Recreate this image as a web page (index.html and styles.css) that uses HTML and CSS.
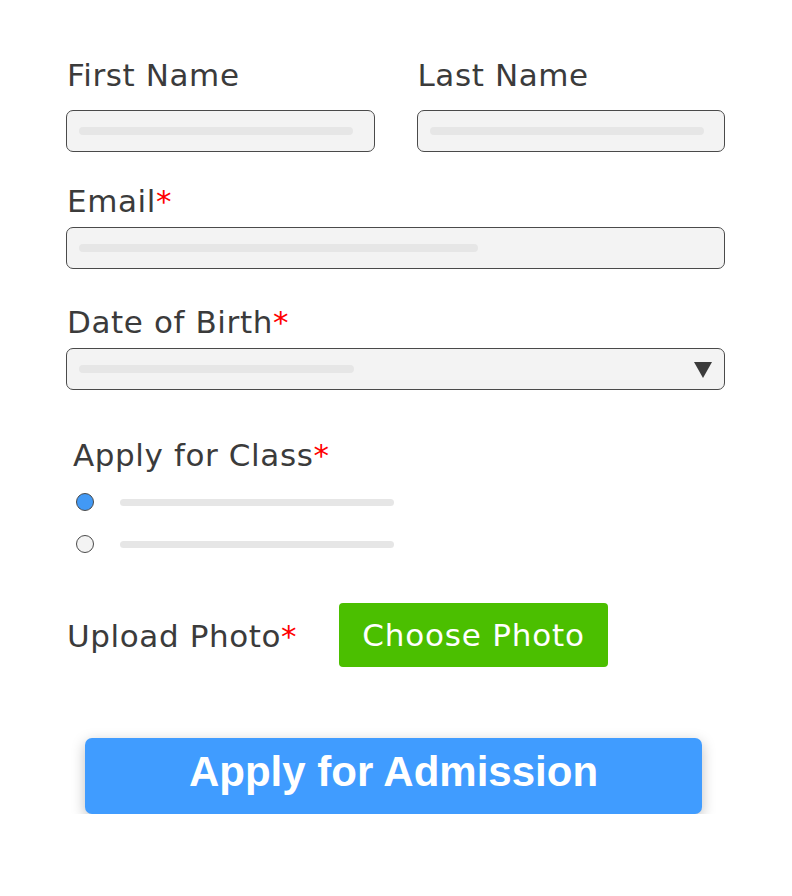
FILE: index.html
```html
<!DOCTYPE html>
<html>
<head>
<meta charset="utf-8">
<link rel="stylesheet" href="styles.css">
</head>
<body>
<form class="form">
  <div class="row two">
    <div class="field">
      <div class="label">First Name</div>
      <div class="input"><span class="ph" style="width:274px"></span></div>
    </div>
    <div class="field">
      <div class="label">Last Name</div>
      <div class="input"><span class="ph" style="width:274px"></span></div>
    </div>
  </div>
  <div class="field mt-email">
    <div class="label">Email<span class="req">*</span></div>
    <div class="input"><span class="ph" style="width:399px"></span></div>
  </div>
  <div class="field mt-dob">
    <div class="label">Date of Birth<span class="req">*</span></div>
    <div class="input select"><span class="ph" style="width:275px"></span><span class="caret"></span></div>
  </div>
  <div class="radios">
    <div class="label">Apply for Class<span class="req">*</span></div>
    <div class="radio-row first"><span class="radio checked"></span><span class="rline"></span></div>
    <div class="radio-row"><span class="radio"></span><span class="rline"></span></div>
  </div>
  <div class="upload">
    <div class="label upload-label">Upload Photo<span class="req">*</span></div>
    <button type="button" class="choose">Choose Photo</button>
  </div>
  <div class="submit-wrap">
    <button type="button" class="submit">Apply for Admission</button>
  </div>
</form>
</body>
</html>
```
FILE: styles.css
```css
html, body {
  margin: 0;
  padding: 0;
  background: #ffffff;
}
body {
  font-family: "DejaVu Sans", "Liberation Sans", sans-serif;
  color: #3b3b3b;
}
.form {
  width: 659px;
  padding: 55px 0 0 66px;
}
.row.two {
  display: flex;
  gap: 42px;
}
.row.two .field {
  flex: 1 1 0;
}
.label {
  font-size: 31px;
  line-height: 40px;
  letter-spacing: 0.6px;
  color: #3b3b3b;
  white-space: nowrap;
}
.field .label {
  padding-left: 1px;
  margin-bottom: 15px;
}
.req {
  color: #ff0000;
  letter-spacing: 0;
}
.input {
  box-sizing: border-box;
  height: 42px;
  border: 1px solid #4a4a4a;
  border-radius: 7px;
  background: #f3f3f3;
  display: flex;
  align-items: center;
  padding-left: 12px;
}
.ph {
  display: block;
  height: 8px;
  border-radius: 4px;
  background: #e6e6e6;
}
.mt-email {
  margin-top: 29px;
}
.mt-email .label,
.mt-dob .label {
  margin-bottom: 6px;
}
.mt-dob {
  margin-top: 33px;
}
.select {
  justify-content: space-between;
  padding-right: 12px;
}
.caret {
  width: 0;
  height: 0;
  border-left: 9px solid transparent;
  border-right: 9px solid transparent;
  border-top: 16px solid #3b3b3b;
  margin-top: 2px;
}
.radios {
  margin-top: 45px;
  padding-left: 7px;
}
.radio-row {
  display: flex;
  align-items: center;
  height: 18px;
  margin-top: 24px;
  padding-left: 3px;
}
.radio-row.first {
  margin-top: 18px;
}
.radio {
  box-sizing: border-box;
  width: 18px;
  height: 18px;
  border-radius: 50%;
  border: 1px solid #4a4a4a;
  background: #f3f3f3;
}
.radio.checked {
  background: #4299f5;
}
.rline {
  display: block;
  width: 274px;
  height: 7px;
  border-radius: 4px;
  background: #e6e6e6;
  margin-left: 26px;
}
.upload {
  display: flex;
  align-items: center;
  margin-top: 50px;
  padding-left: 1px;
}
.upload-label {
  flex: 0 0 272px;
  padding-top: 2px;
}
.choose {
  width: 269px;
  height: 64px;
  border: none;
  border-radius: 4px;
  background: #4bbf00;
  color: #ffffff;
  font-family: "DejaVu Sans", "Liberation Sans", sans-serif;
  font-size: 31px;
  letter-spacing: 0.8px;
  padding: 0;
}
.submit-wrap {
  margin-top: 71px;
  padding-left: 19px;
}
.submit {
  width: 617px;
  height: 76px;
  border: none;
  border-radius: 7px;
  background: #409cff;
  color: #ffffff;
  font-family: "Liberation Sans", Arial, sans-serif;
  font-weight: bold;
  font-size: 42px;
  padding: 0 0 8px 0;
  box-shadow: 0 4px 14px rgba(0, 0, 0, 0.25);
}
```
